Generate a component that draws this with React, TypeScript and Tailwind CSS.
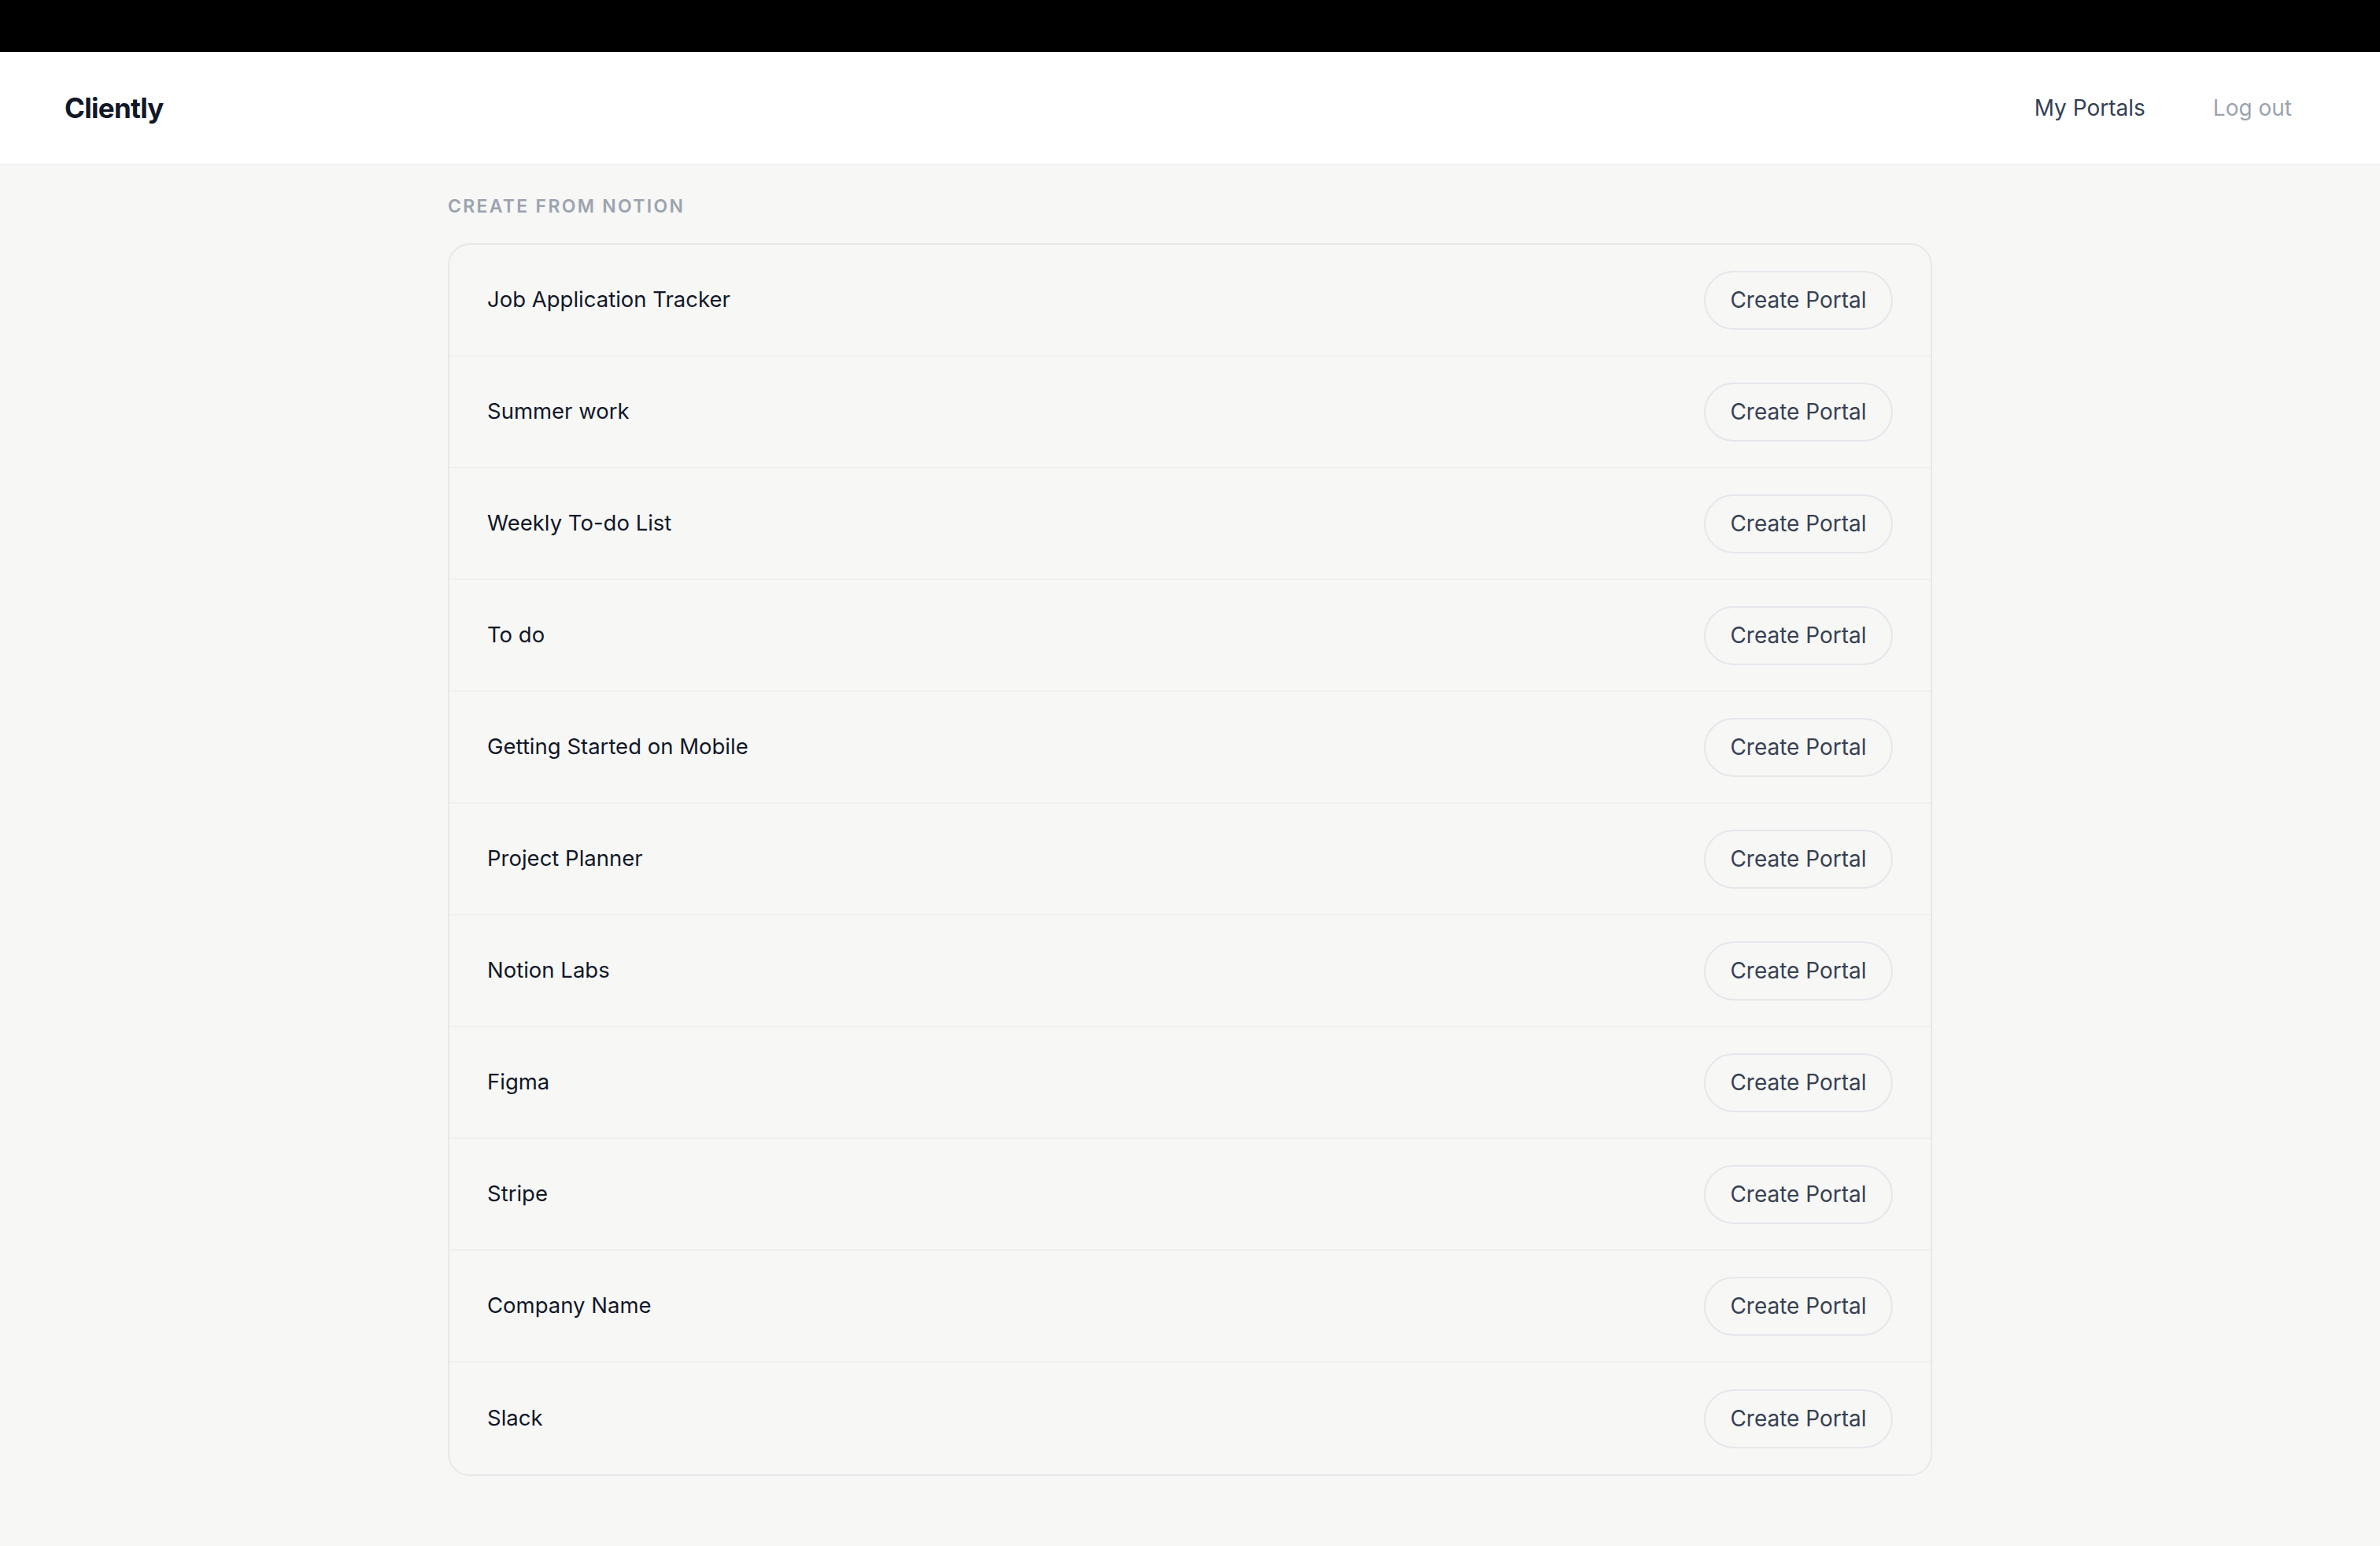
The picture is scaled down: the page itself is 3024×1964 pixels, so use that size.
const templates = [
  "Job Application Tracker",
  "Summer work",
  "Weekly To-do List",
  "To do",
  "Getting Started on Mobile",
  "Project Planner",
  "Notion Labs",
  "Figma",
  "Stripe",
  "Company Name",
  "Slack",
];

export default function App() {
  return (
    <div className="min-h-screen bg-[#f7f7f6] font-['Inter','Liberation_Sans',sans-serif]">
      {/* top strip */}
      <div className="h-[66px] bg-black" />

      {/* header */}
      <header className="flex h-[144px] items-center justify-between border-b-2 border-[#f1f1f0] bg-white pl-[82px] pr-[112px]">
        <div className="text-[35px] font-bold tracking-[-0.02em] text-[#111827]">
          Cliently
        </div>
        <nav className="flex items-center gap-[86px] text-[28px]">
          <a className="text-[#334155]">My Portals</a>
          <a className="text-[#9ca3af]">Log out</a>
        </nav>
      </header>

      <main className="mx-auto w-[1886px] pt-[36px]">
        <h2 className="mb-[31px] text-[23px] leading-[32px] font-semibold tracking-[0.1em] text-[#9ca3af] uppercase">
          Create from Notion
        </h2>

        <div className="overflow-hidden rounded-[28px] border-2 border-[#e8e8ea]">
          {templates.map((name, i) => (
            <div
              key={name}
              className={`flex h-[142px] items-center justify-between px-[48px] ${
                i < templates.length - 1 ? "border-b-2 border-[#f0f0f0]" : ""
              }`}
            >
              <span className="text-[27.5px] text-[#111827]">{name}</span>
              <button className="h-[75px] w-[240px] rounded-full border-2 border-[#e6e7ea] text-[28px] text-[#374151]">
                Create Portal
              </button>
            </div>
          ))}
        </div>
      </main>
    </div>
  );
}
